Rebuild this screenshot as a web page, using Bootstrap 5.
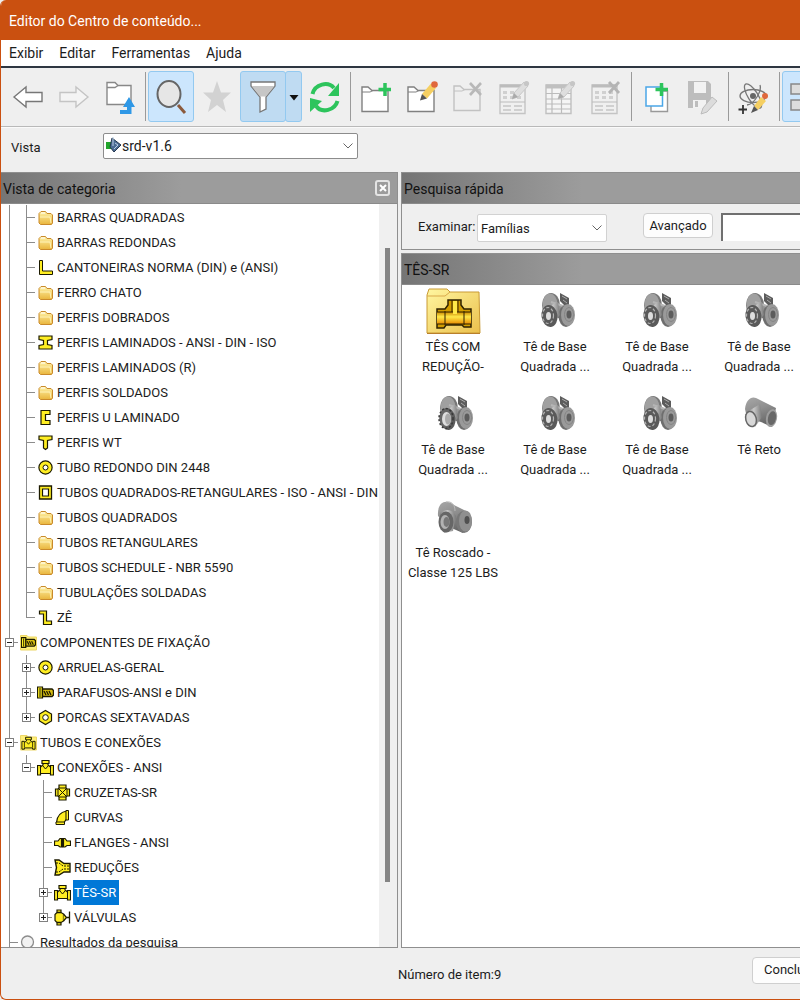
<!DOCTYPE html>
<html lang="pt-BR">
<head>
<meta charset="utf-8">
<meta name="viewport" content="width=device-width, initial-scale=1">
<title>Editor do Centro de conteúdo</title>
<link href="https://cdn.jsdelivr.net/npm/bootstrap@5.3.0/dist/css/bootstrap.min.css" rel="stylesheet">
<style>
:root{--orange:#ca5010;--face:#efefef;--line:#8f8f8f}
body{font-family:Roboto,"Liberation Sans",sans-serif;font-size:14px;line-height:20px;color:#1c1c1c;background:var(--face)}
.frame{border-left:1px solid var(--orange);border-bottom:1px solid var(--orange);height:100vh;min-height:600px;border-radius:6px 0 0 6px}
.titlebar{background:var(--orange);color:#fff;height:40px;padding:1px 8px 0}
.menubar{background:#fff;height:28px;border-bottom:2px solid #2e3641;padding:0 8px;gap:16px}
.menubar a{color:#1c1c1c;text-decoration:none}
.tools{height:59px;padding:3px 0 4px 4px;border-bottom:1px solid #b9b9b9;box-shadow:0 1px 0 #fafafa}
.tool{width:46px;height:51px;border:1px solid transparent;border-radius:3px;background:none;padding:0;flex:none;display:grid;place-items:center}
.tool svg{width:40px;height:40px}
.tool.lit{background:#cce6fd;border-color:#93c9f0}
.tool.held{background:#bfdbf2;border-color:#93c9f0}
.tool.drop{width:17px;margin-left:-1px}
.tool.drop svg{width:10px;height:10px}
.parting{flex:none;width:1px;height:49px;background:#9a9a9a;margin:0 2px}
.viewbar{height:45px;padding:0 0 0 10px}
.viewbar label{width:92px;padding-bottom:4px;font-size:13px}
.form-select.combo{background-color:#fff;border:1px solid #8c8c8c;border-radius:2px;font-size:14px;line-height:20px;color:#1c1c1c;background-image:url("data:image/svg+xml,%3csvg xmlns='http://www.w3.org/2000/svg' viewBox='0 0 10 6'%3e%3cpath d='M.5.5 5 5 9.5.5' fill='none' stroke='%23666'/%3e%3c/svg%3e");background-size:10px 6px;background-position:right 4px center;padding:1px 20px 1px 18px;height:26px}
.form-select.combo.kind{border-color:#d2d2d2;width:130px;height:28px;padding:3px 20px 1px 3px;font-size:13px;margin:3px 0 0}
.viewpick{width:255px;margin-top:-8px}
.viewpick svg{position:absolute;left:3px;top:4px;width:16px;height:16px}
.side{flex:0 0 50%;max-width:397px;border:1px solid var(--line);border-left:0}
.main-pane{flex:1 1 0;min-width:0;margin-left:3px;gap:3px}
.work{min-height:0}
.head{height:31px;flex:none;background:linear-gradient(90deg,#757575,#9c9c9c 180px);border-bottom:1px solid #8a8a8a;padding:2px 2px 0;color:#111}
.shut{width:15px;height:16px;border:2px solid #e4e4e4;border-radius:3px;background:none;padding:0;display:grid;place-items:center;margin:0 5px 2px 0}
.shut svg{width:8px;height:8px}
.tree{background:#fff;padding:1px 0 0;font-size:13px;line-height:25px;margin:0;list-style:none}
.tree li{display:flex;height:25px;white-space:nowrap}
.tree li>svg{width:21px;height:25px;padding:4px 2px 4px 2px;flex:none}
.tree li>span{padding:0 1px}
.tree .sel{background:#0078d7;color:#fff;padding:0 3px 0 1px}
.tree i{flex:none;width:17px;height:25px;display:grid;place-items:center;background-repeat:no-repeat}
.v,.t,.l{background-image:linear-gradient(#8c8c8c,#8c8c8c),linear-gradient(#8c8c8c,#8c8c8c);background-position:8px 0,8px 12px}
.v{background-size:1px 25px,0 0}
.t{background-size:1px 25px,10px 1px}
.l{background-size:1px 12px,10px 1px}
.tree i button{width:9px;height:9px;padding:0;border:1px solid #808080;background:linear-gradient(#222,#222) center/5px 1px no-repeat #fff}
.tree i button.plus{background:linear-gradient(#222,#222) center/5px 1px no-repeat,linear-gradient(#222,#222) center/1px 5px no-repeat #fff}
.rail{flex:none;width:18px;background:#f0f0f0;padding:44px 0 65px 6px}
.rail div{width:5px;height:100%;background:#858585}
.find{height:45px;flex:none;padding:0 0 0 16px;font-size:13px}
.find label{width:59px}
.find .btn,.foot .btn{background:#fdfdfd;border:1px solid #cfcfcf;border-radius:4px;color:#1c1c1c;font-size:13px;line-height:20px}
.find .btn{width:70px;height:25px;padding:1px 0;margin:0 8px 2px 36px}
.find input{height:28px;min-width:0;border:0;border-top:2px solid #707070;border-left:2px solid #707070;border-radius:0}
.box{border:1px solid var(--line);border-right:0}
.items{background:#fff;display:grid;grid-template-columns:repeat(4,102px);grid-auto-rows:103px;align-content:start;padding-top:2px;font-size:13px;text-align:center}
.items figure{margin:0}
.items svg{display:block;width:56px;height:48px;margin:0 auto 2px}
.items figcaption{line-height:20px;color:#1c1c1c}
.foot{height:51px;flex:none;font-size:13px}
.foot .count{padding:3px 0 0;margin-left:397px}
.foot .btn{width:86px;height:27px;padding:2px 11px;margin:-7px -38px 0 0;text-align:left}
</style>
</head>
<body>
<svg width="0" height="0" class="position-absolute" aria-hidden="true">
<defs>
<linearGradient id="gold" x2="0" y2="1"><stop stop-color="#fff3a8"/><stop offset="1" stop-color="#e9b53c"/></linearGradient>
<linearGradient id="pale" x2="1" y2="1"><stop stop-color="#fff6a0"/><stop offset="1" stop-color="#ebc04d"/></linearGradient>
<linearGradient id="steel" x2="1"><stop stop-color="#858585"/><stop offset=".45" stop-color="#c8c8c8"/><stop offset="1" stop-color="#7a7a7a"/></linearGradient>
<linearGradient id="steelv" x2=".4" y2="1"><stop stop-color="#a8a8a8"/><stop offset=".5" stop-color="#8e8e8e"/><stop offset="1" stop-color="#666"/></linearGradient>
<linearGradient id="fire" x2="0" y2="1"><stop stop-color="#c98700"/><stop offset=".4" stop-color="#ffe94a"/><stop offset="1" stop-color="#e88b00"/></linearGradient>
<symbol id="fold" viewBox="0 0 17 17"><path d="M2 14V4.500L4 2.500H8.500L10 4.500H14L15.500 6V14L14.500 15.500H3.500z" fill="url(#gold)" stroke="#c98a2b"/><path d="M3 8H13L14 14" fill="none" stroke="#fff3b8"/><path d="M4 4H8" stroke="#fff"/></symbol>
<symbol id="ell" viewBox="0 0 17 17"><path d="M2.500 1.500H5.500V12H15.500V15.500H2.500z" fill="#ffee22" stroke="#1c1a00"/></symbol>
<symbol id="ibeam" viewBox="0 0 17 17"><path d="M2 2H15V5.500L10.500 6.500V10.500L15 11.500V15H2V11.500L6.500 10.500V6.500L2 5.500z" fill="#ffee22" stroke="#1c1a00" stroke-width="1.200"/></symbol>
<symbol id="chan" viewBox="0 0 17 17"><path d="M4 1.500H13V5.500H8.500V11.500H13V15.500H4z" fill="#ffee22" stroke="#1c1a00" stroke-width="1.200"/></symbol>
<symbol id="tee" viewBox="0 0 17 17"><path d="M2 2H15V5.500L10.500 6.500V14L8.500 15.500L6.500 14V6.500L2 5.500z" fill="#ffee22" stroke="#1c1a00" stroke-width="1.200"/></symbol>
<symbol id="ring" viewBox="0 0 17 17"><circle cx="8.500" cy="8.500" r="6.600" fill="#ffee22" stroke="#1c1a00" stroke-width="1.200"/><circle cx="8.500" cy="8.500" r="2.500" fill="#fff" stroke="#1c1a00"/></symbol>
<symbol id="sq" viewBox="0 0 17 17"><path d="M2.500 2H14.500V15H2.500z" fill="#ffee22" stroke="#1c1a00" stroke-width="1.300"/><path d="M5.500 5H11.500V12H5.500z" fill="#fff" stroke="#1c1a00" stroke-width="1.200"/></symbol>
<symbol id="zed" viewBox="0 0 17 17"><path d="M2.500 2H9.500V12H14.500V15.500H6.500V5H2.500z" fill="#ffee22" stroke="#1c1a00" stroke-width="1.200"/></symbol>
<symbol id="bolt" viewBox="0 0 17 17"><path d="M.5 3H5.500V14H.5z" fill="#ffee22" stroke="#1c1a00" stroke-width="1.200"/><path d="M3 4V13" stroke="#1c1a00"/><path d="M5.500 5H15L16.500 6.500V11L15 12.500H5.500z" fill="#d6bd10" stroke="#1c1a00" stroke-width="1.400"/><path d="M7 7L9 11M9.500 7L11.500 11M12 7L14 11" stroke="#1c1a00" stroke-width="1.300"/></symbol>
<symbol id="boltf" viewBox="0 0 17 17"><path d="M.5 1.500H7L8.500 3H16.500V16H.5z" fill="#ffef78" stroke="#ecd667"/><use href="#bolt" x="1" y="1" width="15" height="15"/></symbol>
<symbol id="nut" viewBox="0 0 17 17"><path d="M8.500 1.500L14.500 5V12L8.500 15.500L2.500 12V5z" fill="#ffee22" stroke="#1c1a00" stroke-width="1.200"/><circle cx="8.500" cy="8.500" r="2.800" fill="#fff" stroke="#1c1a00"/></symbol>
<symbol id="pipe" viewBox="0 0 17 17"><path d="M5 1.500H12V4.500H11V6L13.500 8V6.500H16.500V16H13.500V14.500H3.500V16H.5V6.500H3.500V8L6 6V4.500H5z" fill="#ffee22" stroke="#1c1a00" stroke-width="1.200"/><path d="M3.500 8V14M13.500 8V14M6 4.500H11M6 7L8.500 10L11 7" fill="none" stroke="#1c1a00"/></symbol>
<symbol id="pipef" viewBox="0 0 17 17"><path d="M.5 1.500H7L8.500 3H16.500V16H.5z" fill="#ffef78" stroke="#ecd667"/><use href="#pipe" x="1" y="2" width="15" height="14"/></symbol>
<symbol id="cross" viewBox="0 0 17 17"><path d="M5 1H12V4L13 5H15.500V12H13L12 13V16H5V13L4 12H1.500V5H4L5 4z" fill="#ffee22" stroke="#1c1a00" stroke-width="1.200"/><path d="M4 5V12M13 5V12M5 4H12M5 13H12M5 5L12 12M12 5L5 12" stroke="#1c1a00"/></symbol>
<symbol id="bend" viewBox="0 0 17 17"><path d="M2.500 13.500C3 7 7 3 12.500 2V10L10 13.500z" fill="#ffee22" stroke="#1c1a00" stroke-width="1.200"/><path d="M12 1.500H14.500V11H12zM2 13H10.500V15.500H2z" fill="#ffee22" stroke="#1c1a00"/></symbol>
<symbol id="flan" viewBox="0 0 17 17"><path d="M.5 7H4L6 4.500H7.500V13H6L4 11.500H.5zM16.500 7H13L11 4.500H9.500V13H11L13 11.500H16.500z" fill="#ffee22" stroke="#1c1a00" stroke-width="1.200"/><path d="M8.500 4V13.500" stroke="#1c1a00"/></symbol>
<symbol id="redu" viewBox="0 0 17 17"><path d="M1 1H5L10 4.500H16V13H10L5 16H1L2.500 8.500z" fill="#ffee22" stroke="#1c1a00" stroke-width="1.400"/><path d="M2 4H5L9 7H15M2 13H5L9 10H15" fill="none" stroke="#1c1a00" stroke-dasharray="2 1"/></symbol>
<symbol id="valv" viewBox="0 0 17 17"><path d="M3 1H7V3.500L9.500 5V12L7 13.500V16H3V13.500L1 11.500V5.500L3 3.500z" fill="#ffee22" stroke="#1c1a00" stroke-width="1.200"/><path d="M9.500 5L12.500 8.500L9.500 12" fill="#ffee22" stroke="#1c1a00" stroke-width="1.200"/><path d="M12.500 8.500H15.500M15.500 2.500V14.500M3 3.500H7M3 13.500H7" stroke="#1c1a00" stroke-width="1.300"/></symbol>
<symbol id="res" viewBox="0 0 17 17"><circle cx="7.500" cy="8" r="6" fill="#f2f2f2" stroke="#8c8c8c" stroke-width="1.300"/></symbol>
<symbol id="flanged" viewBox="0 0 56 48">
<ellipse cx="24" cy="18" rx="9" ry="12" fill="#777"/><ellipse cx="23" cy="17.500" rx="7.500" ry="11" fill="#a0a0a0"/>
<path d="M33 6L42 11V20L38 19L33 14z" fill="#5c5c5c"/><path d="M35 9L40 12M36 13L40 16" stroke="#aaa"/>
<path d="M24 14L45 22L40 36L26 28z" fill="url(#steelv)"/><path d="M24 15L42 21" stroke="#b5b5b5" stroke-width="2"/>
<ellipse cx="39" cy="29" rx="7.500" ry="11" fill="#6e6e6e"/><ellipse cx="41" cy="28" rx="7" ry="11" fill="#9a9a9a"/><ellipse cx="42" cy="27.500" rx="2.500" ry="4" fill="#5c5c5c"/><ellipse cx="42" cy="27.500" rx="4.500" ry="7" fill="none" stroke="#858585"/>
<path d="M20 20L31 15L33 28L24 37z" fill="url(#steel)"/>
<ellipse cx="22.500" cy="29" rx="8" ry="11" fill="#5a5a5a" transform="rotate(-8 22.500 29)"/><ellipse cx="21" cy="28.500" rx="5.500" ry="8" fill="none" stroke="#b5b5b5" stroke-width="1.200" stroke-dasharray="3 2"/><ellipse cx="21.500" cy="29" rx="2.500" ry="4" fill="#ddd"/></symbol>
<symbol id="wide" viewBox="0 0 56 48"><use href="#flanged" width="56" height="48"/><ellipse cx="21" cy="28.500" rx="6.500" ry="9.500" fill="#666"/><ellipse cx="21" cy="28.500" rx="7" ry="10" fill="none" stroke="#383838" stroke-width="1.500" stroke-dasharray="2 2"/><ellipse cx="21.500" cy="29" rx="4.500" ry="7" fill="#dedede"/><ellipse cx="23" cy="29" rx="3" ry="5.500" fill="#aaa"/></symbol>
</defs>
</svg>

<div class="frame d-flex flex-column overflow-hidden">
<header class="titlebar d-flex align-items-center flex-shrink-0">Editor do Centro de conteúdo...</header>
<nav class="menubar d-flex align-items-center flex-shrink-0" aria-label="Menu"><a href="#">Exibir</a><a href="#">Editar</a><a href="#">Ferramentas</a><a href="#">Ajuda</a></nav>

<div class="tools d-flex align-items-center flex-shrink-0 overflow-hidden" role="toolbar">
<button class="tool" aria-label="Voltar"><svg viewBox="0 0 40 40"><path d="M6 20L18 10V15.500H34V24.500H18V30z" fill="#fff" stroke="#777" stroke-width="1.400"/></svg></button>
<button class="tool" aria-label="Avançar"><svg viewBox="0 0 40 40"><path d="M34 20L22 10V15.500H6V24.500H22V30z" fill="#f4f4f4" stroke="#c4c4c4" stroke-width="1.400"/></svg></button>
<button class="tool" aria-label="Subir um nível"><svg viewBox="0 0 40 40"><path d="M7 27.500V5.500H15L18 8.500H31V27.500z" fill="#fff" stroke="#888" stroke-width="1.400"/><path d="M7 10.500H15L18 8.500" fill="none" stroke="#888" stroke-width="1.400"/><path d="M29 20L35 30H31.500V37H20V33H27V30H23z" fill="#2f98e6"/></svg></button>
<div class="parting"></div>
<button class="tool lit" aria-label="Pesquisar"><svg viewBox="0 0 40 40"><ellipse cx="18" cy="17" rx="11.500" ry="13" fill="#e6e6e6" stroke="#666" stroke-width="2"/><path d="M27 28L34 36" stroke="#8b5a3c" stroke-width="3"/></svg></button>
<button class="tool" aria-label="Favoritos"><svg viewBox="0 0 40 40"><path d="M20 4L24 15.500H34L26 23L29 35L20 28L11 35L14 23L6 15.500H16z" fill="#d2d2d2"/></svg></button>
<button class="tool held" aria-label="Filtro"><svg viewBox="0 0 40 40"><path d="M8 5H32V9L23 20V32L17 35V20L8 9z" fill="#fff" stroke="#777" stroke-width="1.300"/><path d="M8.500 9H31.500L23 19.500H17z" fill="#c6c6c6"/></svg></button>
<button class="tool held drop" aria-label="Opções de filtro"><svg viewBox="0 0 10 10"><path d="M.5 3H9.500L5 8.500z" fill="#111"/></svg></button>
<button class="tool" aria-label="Atualizar"><svg viewBox="0 0 40 40"><path d="M7.500 17C10 7 23 4 29 11" fill="none" stroke="#2dc45c" stroke-width="4"/><path d="M34 6V19H23z" fill="#2dc45c"/><path d="M32.500 24C30 33 17 37 11 29" fill="none" stroke="#2dc45c" stroke-width="4"/><path d="M5 35V21L17 24z" fill="#2dc45c"/></svg></button>
<div class="parting"></div>
<button class="tool" aria-label="Nova categoria"><svg viewBox="0 0 40 40"><path d="M6 34.500V10H12L16 13.500H32V34.500z" fill="#fff" stroke="#808080" stroke-width="1.400"/><path d="M6 15H14L17 13.500" fill="none" stroke="#808080"/><path d="M29 6V19M22.500 12.500H35" stroke="#2dc45c" stroke-width="3.500"/></svg></button>
<button class="tool" aria-label="Editar categoria"><svg viewBox="0 0 40 40"><path d="M6 34.500V10H12L16 13.500H32V34.500z" fill="#fff" stroke="#808080" stroke-width="1.400"/><path d="M6 15H14L17 13.500" fill="none" stroke="#808080"/><path d="M20 17L29 6.500L34 11L25 21.500z" fill="#f5cf62"/><path d="M20 17L25 21.500L18 23.500z" fill="#555"/><circle cx="32.500" cy="7.500" r="3.300" fill="#e0683c"/></svg></button>
<button class="tool" aria-label="Excluir categoria"><svg viewBox="0 0 40 40"><path d="M6 33.500V9H12L16 12.500H32V33.500z" fill="none" stroke="#c2c2c2" stroke-width="1.400"/><path d="M6 14H14L17 12.500" fill="none" stroke="#c2c2c2"/><path d="M22 6L33 18M33 6L22 18" stroke="#b8b8b8" stroke-width="2.600"/></svg></button>
<button class="tool" aria-label="Propriedades da família"><svg viewBox="0 0 40 40"><g id="sheet"><path d="M6 8H31V36.500H6z" fill="#f0f0f0" stroke="#c4c4c4" stroke-width="1.400"/><path d="M6 9H31" stroke="#bcbcbc" stroke-width="3"/><path d="M9 15.500H28M9 20.500H28" stroke="#d0d0d0" stroke-width="3" stroke-dasharray="4 3"/><path d="M6 25H31" stroke="#bcbcbc"/><path d="M9 29H17M20 29H28M9 33H17M20 33H28" stroke="#d0d0d0" stroke-width="2"/></g><g id="gpen"><path d="M20 16L30 5L34 9L24 20L18 22z" fill="#dedede" stroke="#c8c8c8"/><path d="M20 16L24 20L18 22z" fill="#aaa"/><circle cx="32.500" cy="6.500" r="2.600" fill="#c6c6c6"/></g></svg></button>
<button class="tool" aria-label="Tabela da família"><svg viewBox="0 0 40 40"><path d="M6 8H31V36.500H6z" fill="#f5f5f5" stroke="#c0c0c0" stroke-width="1.400"/><path d="M6 9.500H31" stroke="#c0c0c0" stroke-width="4"/><path d="M6 16.500H31M6 22H31M6 27H31M6 32H31M12 11V36M21.500 11V36" stroke="#bcbcbc" stroke-width="1.200"/><use href="#gpen"/></svg></button>
<button class="tool" aria-label="Excluir família"><svg viewBox="0 0 40 40"><use href="#sheet"/><path d="M23 5L33 16M33 5L23 16" stroke="#b4b4b4" stroke-width="2.800"/></svg></button>
<div class="parting"></div>
<button class="tool" aria-label="Copiar para"><svg viewBox="0 0 40 40"><path d="M14 14H30.500V34.500H14z" fill="#fff" stroke="#999" stroke-width="1.400"/><path d="M9 10H25.500V29H9z" fill="#fff" stroke="#4ba7e8" stroke-width="1.500"/><path d="M24.500 6V19M18.500 12.500H31" stroke="#2dc45c" stroke-width="3.500"/></svg></button>
<button class="tool" aria-label="Salvar"><svg viewBox="0 0 40 40"><path d="M5 4H25L28 7V31H5z" fill="#bdbdbd"/><path d="M11 5H23V16H11zM10 23H23V31H10z" fill="#f2f2f2"/><path d="M12 24H15V30H12z" fill="#bdbdbd"/><path d="M20 31L29 20L34 24L24 35L18 37z" fill="#dcdcdc" stroke="#bcbcbc"/></svg></button>
<div class="parting"></div>
<button class="tool" aria-label="Editar material"><svg viewBox="0 0 40 40"><g fill="none" stroke="#777" stroke-width="1.300"><ellipse cx="19" cy="19" rx="13" ry="6.500"/><ellipse cx="19" cy="19" rx="5" ry="14" transform="rotate(-32 19 19)"/><path d="M26 8C28 13 21 27 13 28"/></g><circle cx="19" cy="19" r="3" fill="#666"/><path d="M20 29L27 20L32 24L24 33z" fill="#f5cf62"/><path d="M20 29L24 33L17 36z" fill="#555"/><circle cx="31" cy="19" r="3" fill="#e0683c"/><path d="M9 28V37M4.500 32.500H13" stroke="#333" stroke-width="1.800"/></svg></button>
<div class="parting"></div>
<button class="tool lit" aria-label="Dividir vista"><svg viewBox="0 0 40 40"><path d="M6 7H20V17H6zM6 23H20V33H6zM24 7H38V17H24zM24 23H38V33H24z" fill="#ddd" stroke="#888" stroke-width="1.500"/></svg></button>
</div>

<div class="viewbar d-flex align-items-center flex-shrink-0">
<label for="view">Vista</label>
<div class="viewpick position-relative"><select id="view" class="form-select combo"><option>srd-v1.6</option></select><svg viewBox="0 0 16 16"><path d="M0 5H6V12H0z" fill="#22a52c"/><path d="M6 1L15 8L8 15L4 10z" fill="#4a6b93" stroke="#26384f"/><path d="M7 0V9M9 6L12 8L8 12" stroke="#bcd0e6" fill="none"/></svg></div>
</div>

<main class="work d-flex flex-grow-1 overflow-hidden">
<section class="side d-flex flex-column">
<div class="head d-flex align-items-center justify-content-between"><span>Vista de categoria</span><button class="shut" aria-label="Fechar"><svg viewBox="0 0 8 8"><path d="M1 1L7 7M7 1L1 7" stroke="#fff" stroke-width="2"/></svg></button></div>
<div class="d-flex flex-grow-1 overflow-hidden">
<ul class="tree flex-grow-1 overflow-hidden">
<li><i class="v"></i><i class="t"></i><svg><use href="#fold"/></svg><span>BARRAS QUADRADAS</span></li>
<li><i class="v"></i><i class="t"></i><svg><use href="#fold"/></svg><span>BARRAS REDONDAS</span></li>
<li><i class="v"></i><i class="t"></i><svg><use href="#ell"/></svg><span>CANTONEIRAS NORMA (DIN) e (ANSI)</span></li>
<li><i class="v"></i><i class="t"></i><svg><use href="#fold"/></svg><span>FERRO CHATO</span></li>
<li><i class="v"></i><i class="t"></i><svg><use href="#fold"/></svg><span>PERFIS DOBRADOS</span></li>
<li><i class="v"></i><i class="t"></i><svg><use href="#ibeam"/></svg><span>PERFIS LAMINADOS - ANSI - DIN - ISO</span></li>
<li><i class="v"></i><i class="t"></i><svg><use href="#fold"/></svg><span>PERFIS LAMINADOS (R)</span></li>
<li><i class="v"></i><i class="t"></i><svg><use href="#fold"/></svg><span>PERFIS SOLDADOS</span></li>
<li><i class="v"></i><i class="t"></i><svg><use href="#chan"/></svg><span>PERFIS U LAMINADO</span></li>
<li><i class="v"></i><i class="t"></i><svg><use href="#tee"/></svg><span>PERFIS WT</span></li>
<li><i class="v"></i><i class="t"></i><svg><use href="#ring"/></svg><span>TUBO REDONDO DIN 2448</span></li>
<li><i class="v"></i><i class="t"></i><svg><use href="#sq"/></svg><span>TUBOS QUADRADOS-RETANGULARES - ISO - ANSI - DIN</span></li>
<li><i class="v"></i><i class="t"></i><svg><use href="#fold"/></svg><span>TUBOS QUADRADOS</span></li>
<li><i class="v"></i><i class="t"></i><svg><use href="#fold"/></svg><span>TUBOS RETANGULARES</span></li>
<li><i class="v"></i><i class="t"></i><svg><use href="#fold"/></svg><span>TUBOS SCHEDULE - NBR 5590</span></li>
<li><i class="v"></i><i class="t"></i><svg><use href="#fold"/></svg><span>TUBULAÇÕES SOLDADAS</span></li>
<li><i class="v"></i><i class="l"></i><svg><use href="#zed"/></svg><span>ZÊ</span></li>
<li><i class="t"><button aria-label="Recolher"></button></i><svg><use href="#boltf"/></svg><span>COMPONENTES DE FIXAÇÃO</span></li>
<li><i class="v"></i><i class="t"><button class="plus" aria-label="Expandir"></button></i><svg><use href="#ring"/></svg><span>ARRUELAS-GERAL</span></li>
<li><i class="v"></i><i class="t"><button class="plus" aria-label="Expandir"></button></i><svg><use href="#bolt"/></svg><span>PARAFUSOS-ANSI e DIN</span></li>
<li><i class="v"></i><i class="l"><button class="plus" aria-label="Expandir"></button></i><svg><use href="#nut"/></svg><span>PORCAS SEXTAVADAS</span></li>
<li><i class="t"><button aria-label="Recolher"></button></i><svg><use href="#pipef"/></svg><span>TUBOS E CONEXÕES</span></li>
<li><i class="v"></i><i class="l"><button aria-label="Recolher"></button></i><svg><use href="#pipe"/></svg><span>CONEXÕES - ANSI</span></li>
<li><i class="v"></i><i></i><i class="t"></i><svg><use href="#cross"/></svg><span>CRUZETAS-SR</span></li>
<li><i class="v"></i><i></i><i class="t"></i><svg><use href="#bend"/></svg><span>CURVAS</span></li>
<li><i class="v"></i><i></i><i class="t"></i><svg><use href="#flan"/></svg><span>FLANGES - ANSI</span></li>
<li><i class="v"></i><i></i><i class="t"></i><svg><use href="#redu"/></svg><span>REDUÇÕES</span></li>
<li><i class="v"></i><i></i><i class="t"><button class="plus" aria-label="Expandir"></button></i><svg><use href="#pipe"/></svg><span class="sel">TÊS-SR</span></li>
<li><i class="v"></i><i></i><i class="l"><button class="plus" aria-label="Expandir"></button></i><svg><use href="#valv"/></svg><span>VÁLVULAS</span></li>
<li><i class="t"></i><svg><use href="#res"/></svg><span>Resultados da pesquisa</span></li>
</ul>
<div class="rail"><div></div></div>
</div>
</section>
<section class="main-pane d-flex flex-column">
<div class="box flex-shrink-0">
<div class="head d-flex align-items-center">Pesquisa rápida</div>
<div class="find d-flex align-items-center">
<label for="kind" class="flex-shrink-0">Examinar:</label><select id="kind" class="form-select combo kind flex-shrink-0"><option>Famílias</option></select>
<button class="btn flex-shrink-0">Avançado</button><input class="form-control" type="text" aria-label="Pesquisar">
</div>
</div>
<div class="box d-flex flex-column flex-grow-1 overflow-hidden">
<div class="head d-flex align-items-center">TÊS-SR</div>
<div class="items flex-grow-1 overflow-hidden">
<figure><svg viewBox="0 0 56 48"><path d="M2 46V8L4 2H22L25 5H54L55 46z" fill="url(#pale)" stroke="#c99a35"/><path d="M2 9H20L25 5" fill="none" stroke="#d9a94a"/><path d="M2 46.500H55" stroke="#b97f2b"/><path d="M12 22H20L23 18V13H36V18L39 22H46V40H39L37 38H21L19 41H12z" fill="#d29c00" stroke="#2e2100" stroke-width="1.500"/><path d="M12 25H46V37H12z" fill="url(#fire)"/><path d="M27 13V25M33 13V25M20 24V38M39 24V38M12 25H46M12 37H46" stroke="#2e2100"/><path d="M28 14H32V27H28z" fill="#ffe94a"/></svg><figcaption>TÊS COM<br>REDUÇÃO-</figcaption></figure>
<figure><svg><use href="#flanged"/></svg><figcaption>Tê de Base<br>Quadrada ...</figcaption></figure>
<figure><svg><use href="#flanged"/></svg><figcaption>Tê de Base<br>Quadrada ...</figcaption></figure>
<figure><svg><use href="#flanged"/></svg><figcaption>Tê de Base<br>Quadrada ...</figcaption></figure>
<figure><svg><use href="#wide"/></svg><figcaption>Tê de Base<br>Quadrada ...</figcaption></figure>
<figure><svg><use href="#flanged"/></svg><figcaption>Tê de Base<br>Quadrada ...</figcaption></figure>
<figure><svg><use href="#flanged"/></svg><figcaption>Tê de Base<br>Quadrada ...</figcaption></figure>
<figure><svg viewBox="0 0 56 48"><path d="M14 19C15 10 20 6 25 8L45 18L41 37L30 32L16 28z" fill="url(#steelv)"/><ellipse cx="40.500" cy="28" rx="5.500" ry="9" fill="#9d9d9d" transform="rotate(12 40 28)"/><ellipse cx="41" cy="28" rx="4" ry="7" fill="#686868" transform="rotate(12 40 28)"/><path d="M16 22L29 14L31 27L24 37z" fill="url(#steel)"/><ellipse cx="20" cy="29" rx="6" ry="8.500" fill="#666" transform="rotate(-15 20 29)"/><ellipse cx="20" cy="29" rx="4.500" ry="7" fill="#d8d8d8" transform="rotate(-15 20 29)"/></svg><figcaption>Tê Reto</figcaption></figure>
<figure><svg viewBox="0 0 56 48"><path d="M13 23C12 10 20 5 29 12L45 20L38 40L24 34z" fill="url(#steelv)"/><path d="M21 9C27 8 30 12 30 18" stroke="#bbb" fill="none"/><ellipse cx="39" cy="29" rx="8" ry="11" fill="#777"/><ellipse cx="40.500" cy="28" rx="6.500" ry="10.500" fill="#8f8f8f"/><ellipse cx="42" cy="27" rx="2.500" ry="4" fill="#505050"/><path d="M15 20C21 15 28 16 31 23L28 38L19 40z" fill="url(#steel)"/><ellipse cx="21" cy="29" rx="7.500" ry="10.500" fill="#666"/><ellipse cx="20" cy="29" rx="4.500" ry="7" fill="#b2b2b2"/><ellipse cx="21.500" cy="29" rx="3" ry="5" fill="#777"/></svg><figcaption>Tê Roscado -<br>Classe 125 LBS</figcaption></figure>
</div>
</div>
</section>
</main>
<footer class="foot d-flex align-items-center justify-content-between"><span class="count">Número de item:9</span><button class="btn">Concluído</button></footer>
</div>
<script src="https://cdn.jsdelivr.net/npm/bootstrap@5.3.0/dist/js/bootstrap.bundle.min.js"></script>
</body>
</html>
